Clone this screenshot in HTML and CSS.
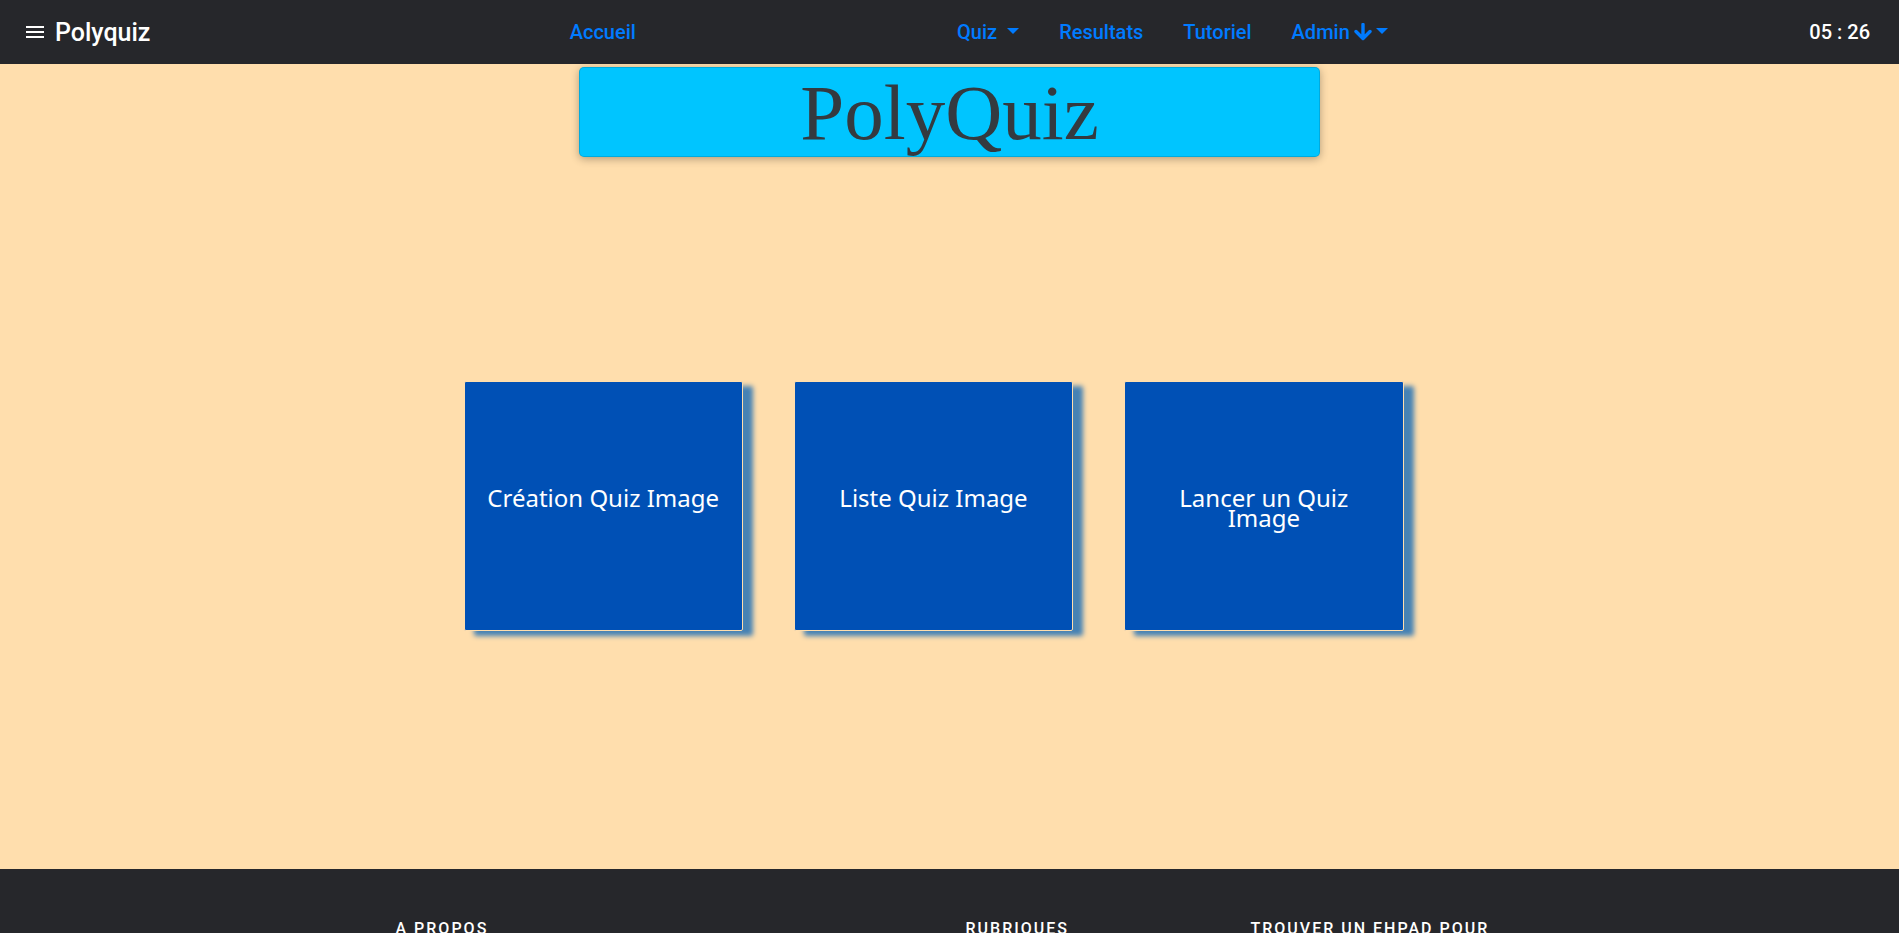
FILE: index.html
```html
<!DOCTYPE html>
<html lang="fr">
<head>
<meta charset="utf-8">
<title>Polyquiz</title>
<link rel="stylesheet" href="styles.css">
</head>
<body>
<header class="topbar">
  <div class="brand">
    <button class="menu-button" type="button" aria-label="Menu">
      <svg width="20" height="14" viewBox="0 0 20 14" aria-hidden="true"><path d="M1 2h18M1 7h18M1 12h18" stroke="currentColor" stroke-width="2"/></svg>
    </button>
    <a class="brand-name" href="#">Polyquiz</a>
  </div>
  <nav class="nav-home"><a class="nav-link" href="#">Accueil</a></nav>
  <nav class="nav-main">
    <a class="nav-link" href="#">Quiz <span class="caret caret-spaced"></span></a>
    <a class="nav-link" href="#">Resultats</a>
    <a class="nav-link" href="#">Tutoriel</a>
    <a class="nav-link" href="#">Admin <svg class="arrow" width="18" height="18" viewBox="0 0 18 18" aria-hidden="true"><path d="M9 1.500V15.500M2 8.500l7 7 7-7" fill="none" stroke="currentColor" stroke-width="3.400" stroke-linecap="round" stroke-linejoin="round"/></svg><span class="caret"></span></a>
  </nav>
  <time class="clock">05 : 26</time>
</header>
<main class="content">
  <h1 class="banner">PolyQuiz</h1>
  <div class="cards">
    <a class="card" href="#">Création Quiz Image</a>
    <a class="card" href="#">Liste Quiz Image</a>
    <a class="card" href="#">Lancer un Quiz Image</a>
  </div>
</main>
<footer class="footer">
  <div class="footer-columns">
    <h6 class="footer-title">A propos</h6>
    <h6 class="footer-title">Rubriques</h6>
    <h6 class="footer-title">Trouver un EHPAD pour</h6>
  </div>
</footer>
</body>
</html>
```
FILE: styles.css
```css
* {
  box-sizing: border-box;
}

body {
  margin: 0;
  height: 100vh;
  overflow: hidden;
  display: grid;
  grid-template-rows: 64px 1fr 64px;
  background: #ffdead;
  font-family: Roboto, "Liberation Sans", sans-serif;
}

a {
  text-decoration: none;
}

.topbar {
  display: grid;
  grid-template-columns: 30% 20.4% 1fr auto;
  align-items: center;
  background: #26272b;
  color: #fff;
  font-size: 20px;
  font-weight: 500;
}

.brand {
  display: flex;
  align-items: center;
  gap: 10px;
  padding-left: 25px;
}

.menu-button {
  display: flex;
  padding: 0;
  border: 0;
  background: none;
  color: #fff;
}

.brand-name {
  color: #fff;
  font-size: 25px;
}

.nav-main {
  display: flex;
  gap: 40px;
}

.nav-link {
  display: flex;
  align-items: center;
  color: #007bff;
}

.caret {
  margin-left: 4px;
  margin-bottom: 3px;
  border: 6px solid transparent;
  border-top-color: currentColor;
  border-bottom: 0;
}

.caret-spaced {
  margin-left: 10px;
}

.arrow {
  margin-left: 4px;
}

.clock {
  padding-right: 29px;
}

.content {
  padding-top: 3px;
  display: flex;
  flex-direction: column;
  align-items: center;
}

.banner {
  width: 39%;
  height: 90px;
  margin: 0;
  border: 1px solid rgba(0, 0, 0, 0.13);
  border-radius: 5px;
  background: #00c5ff;
  box-shadow: 0 2px 8px rgba(0, 0, 0, 0.3);
  color: #343a40;
  font: 400 79px/90px "Liberation Serif", serif;
  text-align: center;
}

.cards {
  display: grid;
  grid-template-columns: repeat(3, 1fr);
  gap: 51px;
  width: 940px;
  margin-top: 224px;
  margin-right: 32px;
}

.card {
  height: 250px;
  padding: 106px 20px 0;
  border: 1px solid #ffdead;
  border-radius: 2px;
  background: #0050b5;
  box-shadow: 10px 5px 5px steelblue;
  color: #fff;
  font: 400 24px/20px "Noto Sans", sans-serif;
  text-align: center;
}

.footer {
  overflow: hidden;
  padding-top: 48px;
  background: #26272b;
  color: #fff;
}

.footer-columns {
  display: grid;
  grid-template-columns: 2fr 1fr 1fr;
  width: 1140px;
  margin: 0 auto;
}

.footer-title {
  margin: 0;
  padding: 0 16px;
  font-size: 16px;
  font-weight: 500;
  line-height: 24px;
  letter-spacing: 2px;
  text-transform: uppercase;
  white-space: nowrap;
}
```
